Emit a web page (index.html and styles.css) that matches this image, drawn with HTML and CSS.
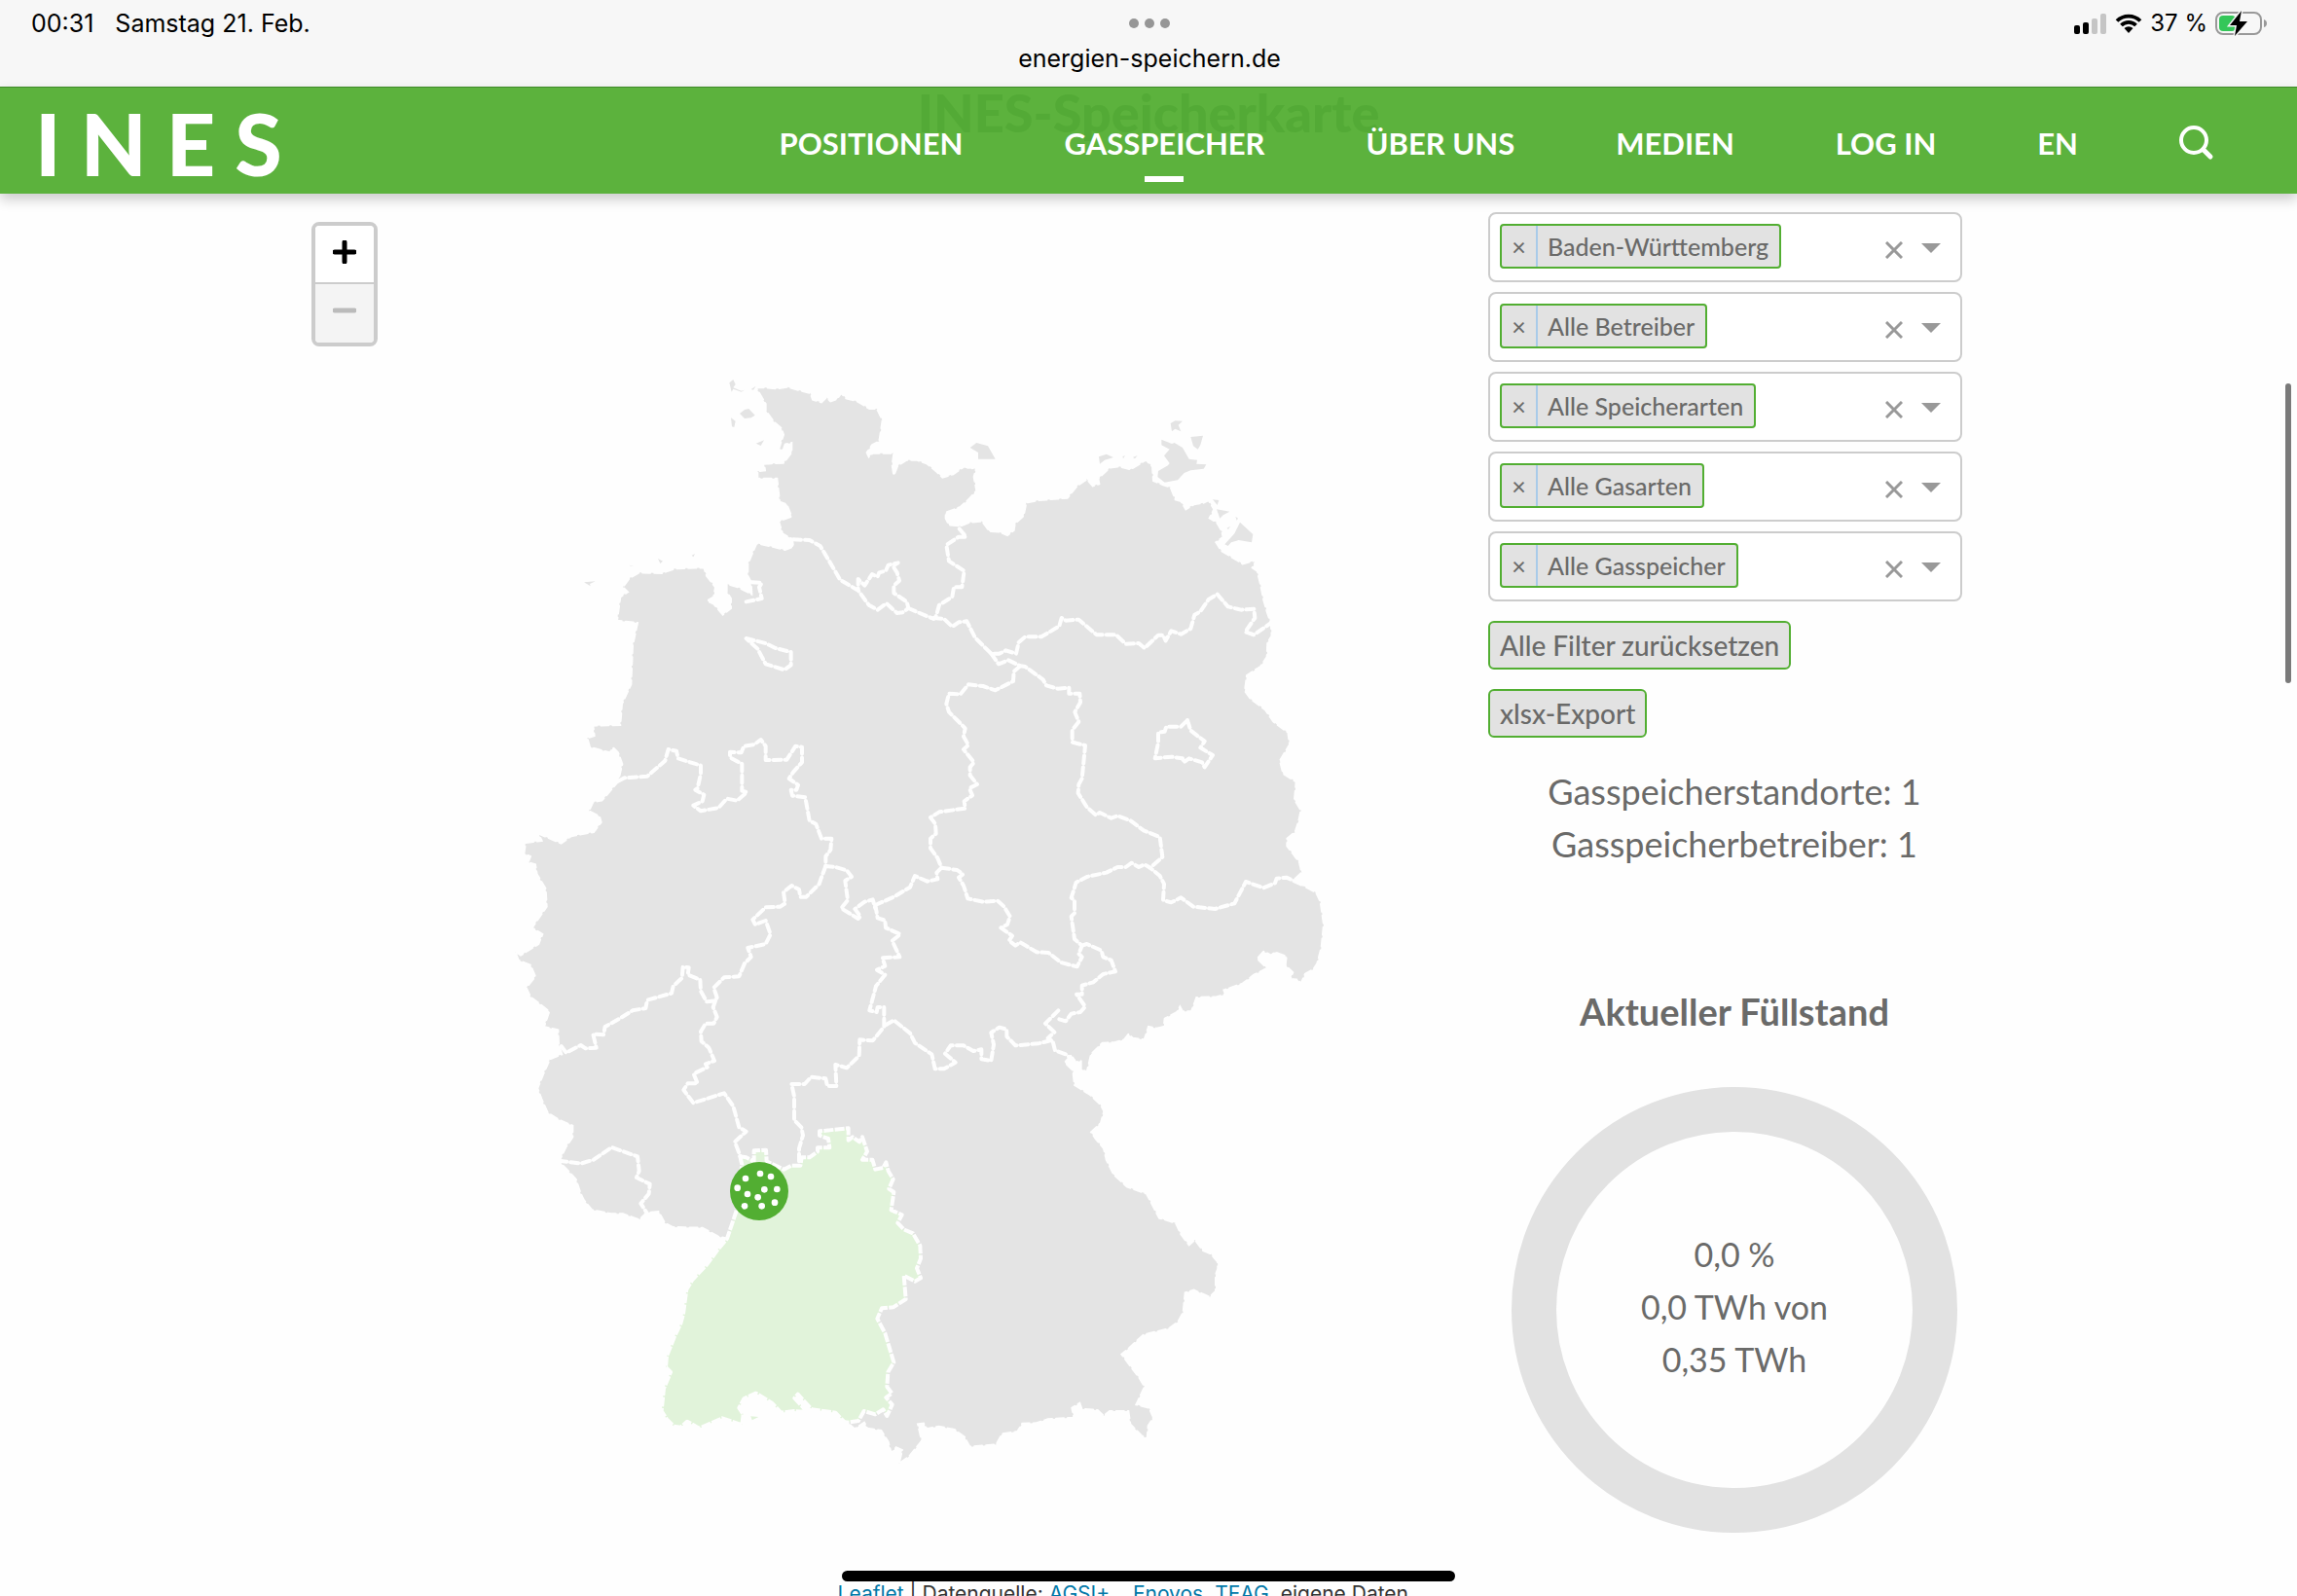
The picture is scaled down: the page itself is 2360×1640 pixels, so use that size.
FILE: index.html
```html
<!DOCTYPE html>
<html lang="de">
<head>
<meta charset="utf-8">
<meta name="viewport" content="width=device-width, initial-scale=1">
<title>INES-Speicherkarte</title>
<link rel="stylesheet" href="styles.css">
</head>
<body>
<div class="status">
  <div class="status-side status-left"><span>00:31</span><span>Samstag 21. Feb.</span></div>
  <div class="status-mid">
    <span class="dots"><i></i><i></i><i></i></span>
    <span class="url">energien-speichern.de</span>
  </div>
  <div class="status-side status-right">
    <svg width="34" height="21" viewBox="0 0 34 21" aria-hidden="true"><rect y="12" width="6" height="9" rx="2"/><rect x="9" y="9" width="6" height="12" rx="2"/><rect x="18" y="5" width="6" height="16" rx="2" fill="#c5c5c5"/><rect x="27" width="6" height="21" rx="2" fill="#c5c5c5"/></svg>
    <svg width="28" height="20" viewBox="0 0 28 20" aria-hidden="true"><path d="M2 7.500a17 17 0 0 1 24 0M6.500 12a10.600 10.600 0 0 1 15 0" fill="none" stroke="#000" stroke-width="3.800"/><path d="M14 20l-4.500-5a6.500 6.500 0 0 1 9 0z"/></svg>
    <span>37 %</span>
    <svg class="battery" width="54" height="26" viewBox="0 0 54 26" aria-hidden="true"><rect x="1" y="2" width="46" height="22" rx="7" fill="none" stroke="#999" stroke-width="2"/><path d="M50 9q3 1 3 4t-3 4z" fill="#999"/><rect x="4" y="5" width="17" height="16" rx="4" fill="#34c759"/><path d="M27 0L15 15h7l-2 11L33 11h-8z" stroke="#f7f7f7" stroke-width="3"/><path d="M27 0L15 15h7l-2 11L33 11h-8z"/></svg>
  </div>
</div>

<header class="header">
  <h1 class="under-title">INES-Speicherkarte</h1>
  <a class="logo" href="#" aria-label="INES"><span>I</span><span>N</span><span>E</span><span>S</span></a>
  <nav class="nav">
    <a href="#">POSITIONEN</a>
    <a href="#" class="active">GASSPEICHER</a>
    <a href="#">ÜBER UNS</a>
    <a href="#">MEDIEN</a>
    <a href="#">LOG IN</a>
    <a href="#">EN</a>
    <button class="search" type="button" aria-label="Suche"><svg width="36" height="36" viewBox="0 0 36 36"><circle cx="15" cy="15" r="13" fill="none" stroke="#fff" stroke-width="4"/><path d="M25 25l7 7" stroke="#fff" stroke-width="5" stroke-linecap="round"/></svg></button>
  </nav>
</header>

<main class="content">
  <section class="map">
    <div class="zoom">
      <button type="button" aria-label="Vergrößern"><svg width="24" height="24" viewBox="0 0 24 24"><path d="M2 12h20M12 2v20" stroke="#000" stroke-width="5" stroke-linecap="round"/></svg></button>
      <button type="button" aria-label="Verkleinern" disabled><svg width="24" height="24" viewBox="0 0 24 24"><path d="M2 12h20" stroke="#bbb" stroke-width="5" stroke-linecap="round"/></svg></button>
    </div>
    <svg class="germany" viewBox="0 0 2580 3480" role="img" aria-label="Karte der Gasspeicher in Deutschland">
      <path class="land coast" d="M770 85L800 85 835 88 868 83 900 92 938 102 945 122 972 130 987 115 1000 127 1020 120 1033 102 1048 118 1082 127 1120 150 1143 150 1160 185 1155 220 1150 250 1128 262 1112 285 1118 298 1130 287 1195 287 1190 325 1195 355 1207 325 1235 308 1265 308 1298 320 1328 345 1345 362 1378 352 1412 328 1430 335 1450 330 1442 360 1450 403 1425 430 1400 453 1355 470 1355 488 1365 508 1400 512 1430 500 1467 497 1490 528 1520 530 1545 540 1565 525 1568 505 1595 480 1603 440 1635 433 1730 425 1760 388 1790 367 1808 388 1828 382 1825 365 1860 332 1890 328 1925 337 1972 308 1992 328 1995 372 2025 385 2048 392 2063 430 2080 435 2095 460 2120 445 2150 440 2165 432 2182 460 2168 487 2190 500 2205 525 2210 545 2188 562 2205 588 2270 628 2313 617 2300 640 2315 650 2325 690 2335 740 2345 775 2357 810 2360 850 2347 870 2345 915 2325 945 2283 972 2277 1020 2295 1045 2340 1078 2365 1115 2410 1148 2415 1185 2385 1235 2395 1275 2435 1300 2430 1355 2450 1388 2443 1420 2432 1455 2407 1475 2407 1498 2445 1548 2452 1580 2430 1600 2460 1622 2497 1642 2510 1670 2520 1740 2513 1810 2500 1860 2488 1878 2463 1892 2450 1922 2440 1910 2417 1908 2425 1888 2402 1865 2405 1838 2370 1825 2358 1835 2335 1823 2315 1845 2345 1875 2305 1895 2270 1922 2212 1942 2217 1955 2190 1963 2128 1965 2112 2008 2085 2008 2077 1993 2068 2010 2030 2030 2027 2055 2005 2060 1980 2055 1967 2095 1932 2090 1918 2078 1905 2095 1877 2103 1838 2105 1803 2140 1790 2195 1772 2185 1772 2160 1755 2165 1742 2142 1722 2165 1747 2190 1752 2235 1800 2265 1832 2295 1843 2315 1833 2352 1803 2380 1818 2402 1842 2430 1850 2465 1872 2510 1913 2548 1974 2570 1995 2610 2013 2645 2064 2660 2080 2695 2105 2728 2123 2712 2148 2745 2172 2755 2193 2780 2194 2800 2187 2820 2187 2870 2169 2888 2120 2867 2093 2875 2087 2935 2071 2965 2044 2985 1964 3005 1921 3045 1897 3065 1927 3105 1952 3138 1968 3165 1942 3220 1982 3230 1995 3260 1979 3285 1976 3325 1958 3315 1924 3280 1918 3240 1860 3240 1842 3255 1823 3237 1774 3233 1768 3215 1744 3230 1750 3260 1670 3265 1633 3277 1591 3278 1576 3303 1529 3310 1511 3343 1429 3350 1413 3320 1382 3297 1333 3287 1297 3295 1287 3278 1269 3280 1281 3332 1242 3380 1211 3402 1221 3360 1202 3352 1187 3370 1178 3335 1156 3300 1113 3293 1104 3275 1074 3295 1052 3275 1000 3200 700 3150 681 2708 654 2702 605 2675 513 2673 489 2660 470 2625 433 2628 411 2650 360 2632 325 2632 265 2620 240 2590 230 2570 215 2525 190 2498 163 2470 185 2425 205 2395 205 2360 165 2343 128 2320 110 2280 97 2245 115 2200 135 2155 172 2140 162 2110 160 2065 117 2055 133 2008 75 1963 62 1935 90 1900 75 1865 38 1850 28 1823 45 1835 100 1800 112 1770 80 1750 125 1685 122 1630 95 1585 90 1555 68 1548 75 1530 55 1522 60 1488 110 1482 100 1460 170 1490 200 1468 270 1455 293 1425 288 1407 255 1390 268 1362 295 1358 345 1300 358 1245 345 1210 330 1195 320 1210 258 1193 250 1165 272 1158 268 1127 352 1125 357 1060 385 1000 390 880 405 810 342 803 352 730 375 715 360 700 380 672 410 655 480 657 520 643 610 640 618 665 645 700 640 730 620 742 640 752 668 785 693 765 693 735 680 715 680 690 715 700 757 722 755 685 745 665 745 630 757 600 772 565 820 575 860 585 885 575 882 552 852 535 840 497 880 482 865 445 843 437 835 365 775 365 775 343 798 340 795 320 855 317 880 285 880 255 860 260 855 275 840 275 855 230 848 210 825 190 800 155 800 135Z"/>
      <g class="land">
        <path d="M688 70L700 60 707 75 700 85 725 95 735 92 725 98 700 89 695 98zM720 165L735 153 748 150 767 170 755 178 735 180zM693 178L707 188 703 207 696 205zM770 257L795 247 785 264zM755 90L770 80 762 92z"/>
        <path d="M1430 270L1450 255 1485 265 1508 305 1455 305 1455 285zM1827 298L1850 290 1872 300 1845 308 1830 320zM1900 297l8-2-6 8zM1932 300l14-6-8 10z"/>
        <path d="M2020 245L2052 258 2060 255 2085 270 2105 305 2130 308 2128 320 2158 322 2150 335 2110 340 2090 348 2070 370 2030 377 2008 360 2010 342 2040 325 2045 318 2028 295 2045 275 2020 262zM2048 195L2062 187 2085 188 2072 200 2080 220 2062 212 2052 220zM2110 237L2148 233 2140 262 2132 275 2118 265z"/>
        <path d="M2178 430L2197 432 2192 447zM2190 460L2230 467 2210 478 2200 488zM2222 518l10-6-6 10zM2248 482l8 6-4 6zM2225 573L2215 568 2245 535 2262 500 2302 537 2298 562 2258 555 2235 562z"/>
        <path d="M240 685L275 682 258 690 260 697zM468 612L483 620 475 627zM572 602L582 597 577 607zM378 632L396 637 384 635z"/>
      </g>
      <path class="selected" d="M721 2455L740 2458 764 2470 764 2437 801 2435 803 2470 856 2495 880 2483 907 2483 911 2458 935 2458 960 2440 960 2428 997 2428 993 2400 966 2390 966 2377 1055 2368 1055 2405 1068 2395 1089 2410 1098 2395 1113 2440 1098 2465 1129 2465 1138 2495 1162 2490 1171 2473 1178 2500 1193 2525 1180 2555 1195 2565 1187 2620 1220 2635 1207 2660 1226 2680 1254 2692 1276 2730 1278 2770 1266 2800 1278 2830 1260 2840 1226 2822 1232 2895 1193 2920 1158 2923 1144 2955 1168 3000 1195 3090 1177 3120 1174 3165 1189 3185 1171 3198 1190 3220 1174 3255 1162 3235 1138 3250 1103 3240 1086 3270 1052 3275 1042 3273 1015 3245 942 3235 899 3188 889 3200 929 3243 887 3240 847 3245 819 3215 770 3185 733 3202 718 3230 731 3250 727 3283 666 3262 595 3293 558 3272 538 3290 517 3287 495 3265 479 3240 486 3170 507 3120 492 3105 495 3070 519 3010 538 2970 546 2940 556 2865 574 2835 617 2790 654 2740 681 2708 709 2625 727 2480z"/>
      <path fill="#e1f3da" d="M754 3256l24 2-20 10z"/>
      <g class="border">
        <path d="M885 553L935 555 968 573 1005 635 1030 678 1085 710 1118 755 1145 770 1172 750 1205 780 1222 778 1240 765 1235 745 1195 718 1195 695 1212 680 1205 655 1192 635 1208 625 1178 632 1170 650 1150 655 1145 668 1128 660 1105 695 1085 675 1085 710M1240 765L1270 778 1318 798 1325 790 1335 755 1375 730 1380 700 1405 700 1412 650 1365 620 1357 570 1395 545 1418 545 1395 518"/>
        <path d="M1318 795L1350 798 1375 822 1395 808 1420 805 1445 855 1475 885 1495 905 1520 905 1540 895 1572 905 1580 870 1600 853 1650 853 1705 820 1712 795 1725 803 1765 800 1820 847 1880 847 1910 875 1950 873 1968 888 2010 848 2025 848 2033 865 2050 835 2080 845 2110 828 2122 785 2140 775 2165 738 2192 722 2225 760 2265 770 2305 767 2308 795 2278 838 2305 847 2355 812"/>
        <path d="M1495 905L1518 937 1548 925 1585 943 1600 945 1655 985 1665 1003 1700 1013 1735 1010 1735 1028 1768 1028 1770 1055 1753 1085 1765 1115 1745 1140 1745 1178 1785 1188 1780 1240 1775 1290 1765 1308 1763 1335 1790 1378 1818 1403 1830 1395 1865 1412 1885 1405 1925 1420 1965 1450 2015 1470 2023 1532 1985 1565"/>
        <path d="M1585 943L1565 960 1563 990 1508 1018 1470 1005 1425 1000 1400 1030 1365 1028 1357 1060 1365 1085 1415 1135 1410 1160 1425 1187 1410 1200 1442 1240 1430 1255 1430 1280 1452 1308 1428 1320 1437 1342 1412 1360 1415 1382 1335 1393 1308 1410 1323 1430 1325 1460 1308 1475 1308 1505 1330 1535 1342 1565 1327 1580 1330 1600 1298 1607 1260 1590 1245 1625 1195 1655 1138 1680"/>
        <path d="M1342 1565L1390 1572 1408 1585 1395 1595 1410 1620 1423 1660 1470 1670 1515 1667 1535 1685 1553 1715 1545 1740 1525 1750 1560 1775 1550 1790 1570 1805 1585 1795 1635 1825 1672 1827 1710 1857 1760 1870 1775 1840 1765 1830 1775 1805 1752 1785 1742 1715 1752 1705 1752 1665 1742 1658 1757 1610 1790 1593 1850 1580 1885 1563 1910 1563 1928 1550 1950 1563 1968 1555 1985 1565 2015 1590 2028 1615 2025 1665 2050 1672 2080 1657 2118 1685 2185 1692 2245 1675 2280 1608 2335 1627 2370 1612 2375 1598 2405 1595 2450 1615"/>
        <path d="M1775 1805L1790 1800 1835 1820 1840 1840 1865 1850 1878 1885 1840 1893 1810 1918 1775 1928 1775 1955 1758 1955 1785 1993 1770 2010 1742 2015 1725 2038 1705 2032M1702 2005L1662 2045 1690 2072 1670 2090 1685 2100 1692 2128 1725 2140 1750 2160M1680 2097L1640 2107 1570 2113 1543 2085 1543 2063 1520 2057 1495 2073 1503 2110 1495 2160 1465 2155 1465 2125 1440 2130 1410 2113 1370 2113 1353 2138 1385 2165 1350 2185 1322 2185 1312 2140 1260 2105 1245 2075 1195 2035 1170 2050"/>
        <path d="M1138 1680L1145 1720 1168 1727 1170 1750 1215 1770 1190 1790 1213 1840 1160 1843 1168 1868 1143 1880 1168 1895 1140 1930 1120 2005 1142 2010 1145 1995 1165 1995 1165 2055 1130 2098 1090 2095 1088 2145 1050 2182 1015 2172 1018 2238 990 2238 985 2215 940 2210 920 2232 880 2232 888 2270 888 2343 910 2365 915 2390 903 2430 903 2470"/>
        <path d="M345 1298L365 1288 435 1283 490 1235 500 1200 525 1205 530 1228 600 1250 600 1275 590 1320 583 1325 610 1340 605 1360 577 1373 600 1390 655 1380 680 1352 712 1358 742 1332 727 1328 727 1245 690 1225 690 1208 725 1210 733 1190 765 1185 785 1170 800 1190 800 1233 865 1232 892 1190 912 1193 912 1240 885 1270 872 1290 900 1310 895 1325 878 1325 882 1343 922 1348 935 1420 955 1430 972 1475 1003 1475 1000 1510 985 1530 985 1560 1015 1563 1050 1573 1065 1593 1045 1605 1053 1665 1033 1690 1085 1722 1092 1715 1075 1692 1105 1670 1130 1663 1138 1690"/>
        <path d="M985 1560L970 1600 965 1615 925 1655 907 1655 903 1632 880 1620 855 1640 860 1675 845 1685 800 1687 760 1725 768 1740 800 1728 815 1770 800 1800 745 1812 755 1840 735 1860 718 1900 672 1903 640 1935 650 1965 645 1975 618 1978 600 1945 598 1910 560 1895 563 1873 545 1870 542 1905 515 1930 510 1952 435 1973 430 1998 390 2005 350 2030 305 2055 300 2080 268 2078 278 2120 245 2122 230 2112 185 2135 170 2115"/>
        <path d="M645 1975L638 1995 650 2025 640 2045 615 2045 600 2070 602 2100 625 2120 642 2160 615 2170 620 2180 578 2200 590 2230 560 2230 547 2250 577 2290 672 2260 700 2300 718 2365 740 2378 705 2410 722 2455M163 2468L230 2477 270 2465 325 2427 405 2455 410 2500 402 2520 443 2540 440 2570 415 2600 433 2628"/>
        <path d="M2100 1110L2110 1142 2153 1175 2140 1195 2178 1218 2153 1255 2145 1240 2105 1228 2088 1240 2085 1228 2050 1223 2000 1228 2010 1180 2010 1148 2030 1145 2035 1130 2080 1130zM740 858L800 873 830 888 878 900 878 940 858 955 800 937 775 890zM757 685L788 687 780 700 788 735 740 745"/>
      </g>
      <g class="marker">
        <circle cx="780" cy="2562" r="90" fill="#52ae32"/>
        <g fill="#fff"><circle cx="783" cy="2508" r="10"/><circle cx="816" cy="2517" r="10"/><circle cx="738" cy="2523" r="10"/><circle cx="713" cy="2552" r="10"/><circle cx="796" cy="2557" r="10"/><circle cx="835" cy="2556" r="10"/><circle cx="744" cy="2571" r="10"/><circle cx="776" cy="2581" r="10"/><circle cx="828" cy="2597" r="10"/><circle cx="735" cy="2608" r="10"/><circle cx="788" cy="2608" r="10"/></g>
      </g>
    </svg>
    <p class="credit"><a href="#">Leaflet</a> | Datenquelle: <a href="#">AGSI+</a>&nbsp; , <a href="#">Enovos</a>, <a href="#">TEAG</a>, eigene Daten</p>
  </section>

  <aside class="side">
    <form class="filters">
      <div class="filter"><span class="chip"><button type="button" aria-label="Entfernen">×</button><span>Baden-Württemberg</span></span><select aria-label="Bundesland"><option></option></select><button class="clear" type="button" aria-label="Leeren"><svg width="18" height="18" viewBox="0 0 18 18"><path d="M1 1l16 16M17 1L1 17"/></svg></button><span class="arrow"></span></div>
      <div class="filter"><span class="chip"><button type="button" aria-label="Entfernen">×</button><span>Alle Betreiber</span></span><select aria-label="Betreiber"><option></option></select><button class="clear" type="button" aria-label="Leeren"><svg width="18" height="18" viewBox="0 0 18 18"><path d="M1 1l16 16M17 1L1 17"/></svg></button><span class="arrow"></span></div>
      <div class="filter"><span class="chip"><button type="button" aria-label="Entfernen">×</button><span>Alle Speicherarten</span></span><select aria-label="Speicherart"><option></option></select><button class="clear" type="button" aria-label="Leeren"><svg width="18" height="18" viewBox="0 0 18 18"><path d="M1 1l16 16M17 1L1 17"/></svg></button><span class="arrow"></span></div>
      <div class="filter"><span class="chip"><button type="button" aria-label="Entfernen">×</button><span>Alle Gasarten</span></span><select aria-label="Gasart"><option></option></select><button class="clear" type="button" aria-label="Leeren"><svg width="18" height="18" viewBox="0 0 18 18"><path d="M1 1l16 16M17 1L1 17"/></svg></button><span class="arrow"></span></div>
      <div class="filter"><span class="chip"><button type="button" aria-label="Entfernen">×</button><span>Alle Gasspeicher</span></span><select aria-label="Gasspeicher"><option></option></select><button class="clear" type="button" aria-label="Leeren"><svg width="18" height="18" viewBox="0 0 18 18"><path d="M1 1l16 16M17 1L1 17"/></svg></button><span class="arrow"></span></div>
    </form>
    <div class="actions">
      <button type="button">Alle Filter zurücksetzen</button>
      <button type="button">xlsx-Export</button>
    </div>
    <div class="counts">
      <p>Gasspeicherstandorte: 1</p>
      <p>Gasspeicherbetreiber: 1</p>
    </div>
    <h2>Aktueller Füllstand</h2>
    <div class="ring">
      <p>0,0 %</p>
      <p>0,0 TWh von</p>
      <p>0,35 TWh</p>
    </div>
  </aside>
</main>
<div class="scrollbar"></div>
<div class="home-bar"></div>
</body>
</html>
```
FILE: styles.css
```css
* { box-sizing: border-box; }
body {
  margin: 0;
  height: 100vh;
  overflow: hidden;
  background: #fefefe;
  color: #6a6a69;
  font-family: Lato, "Open Sans", sans-serif;
}
p, h1, h2 { margin: 0; }
a { color: inherit; text-decoration: none; }
button, select { font: inherit; color: inherit; margin: 0; padding: 0; border: 0; background: none; }
svg { display: block; }

/* status bar */
.status {
  display: grid;
  grid-template-columns: 1fr auto 1fr;
  height: 89px;
  padding: 0 30px 0 32px;
  background: #f7f7f7;
  color: #000;
  font: 24px/28px Inter, sans-serif;
}
.status-side { display: flex; align-items: center; gap: 22px; height: 48px; }
.status-left { font-size: 25px; }
.status-right { justify-content: flex-end; gap: 8px; }
.status-mid { display: flex; flex-direction: column; align-items: center; gap: 15px; padding-top: 19px; }
.dots { display: flex; gap: 6px; }
.dots i { width: 10px; height: 10px; border-radius: 50%; background: #969696; }
.url { font-size: 25px; line-height: 32px; }

/* header */
.header {
  position: relative;
  z-index: 2;
  display: flex;
  align-items: center;
  justify-content: space-between;
  height: 110px;
  padding: 5px 85px 0 36px;
  border-top: 1px solid #3f8a28;
  background: #5cb23d;
  box-shadow: 0 6px 12px rgba(0, 0, 0, .2);
  color: #fff;
}
.under-title {
  position: absolute;
  top: 0;
  left: 0;
  right: 0;
  text-align: center;
  font-size: 54px;
  font-weight: 900;
  line-height: 52px;
  color: #53aa36;
}
.logo { position: relative; display: flex; gap: 20px; font-size: 88px; line-height: 88px; font-weight: 900; }
.nav { position: relative; display: flex; align-items: center; gap: 104px; font-size: 31px; line-height: 40px; font-weight: 700; }
.nav a { position: relative; }
.nav .active::after {
  content: "";
  position: absolute;
  left: 50%;
  bottom: -20px;
  width: 40px;
  height: 6px;
  margin-left: -20px;
  background: #fff;
}

/* content */
.content {
  display: grid;
  grid-template-columns: 1fr 511px;
  gap: 79px;
  max-width: 1720px;
  margin: 0 auto;
}
.map { position: relative; padding-top: 171px; }
.zoom {
  position: absolute;
  top: 29px;
  left: 0;
  border: 4px solid #ccc;
  border-radius: 8px;
  overflow: hidden;
}
.zoom button { display: grid; place-items: center; width: 60px; height: 60px; padding-bottom: 6px; background: #fff; }
.zoom button:first-child { border-bottom: 2px solid #ccc; padding-bottom: 4px; }
.zoom button:disabled { background: #f4f4f4; }
.germany { width: 100%; padding: 0 70px 0 200px; }
.land { fill: #e4e4e4; }
.coast { stroke: #fefefe; stroke-width: 6; stroke-linecap: round; stroke-dasharray: 24 12; }
.selected { fill: #e1f3da; stroke: #fefefe; stroke-width: 12; stroke-linejoin: round; stroke-dasharray: 30 4; }
.border { fill: none; stroke: #fefefe; stroke-width: 12; stroke-linejoin: round; stroke-linecap: round; stroke-dasharray: 24 12; }
.credit { margin-top: 92px; padding-right: 3px; text-align: right; font: 21px/32px Inter, sans-serif; color: #333; }
.credit a { color: #0078a8; }

/* filters */
.side { padding: 19px 5px 0 0; }
.filters { display: grid; gap: 10px; margin-right: 19px; }
.filter {
  display: flex;
  align-items: flex-start;
  height: 72px;
  padding: 10px 20px 0 10px;
  border: 2px solid #ccc;
  border-radius: 8px;
  background: #fff;
}
.chip {
  display: flex;
  height: 46px;
  border: 2px solid #52ae32;
  border-radius: 4px;
  background: #e2e2e2;
  font-size: 25px;
  line-height: 42px;
  font-weight: 500;
}
.chip button { width: 37px; border-right: 2px solid #a9cbe9; }
.chip > span { padding: 0 11px 0 10px; }
.filter select { flex: 1; min-width: 0; height: 46px; appearance: none; }
.clear { margin: 18px 19px 0 0; }
.clear path { stroke: #999; stroke-width: 3; }
.arrow { width: 20px; margin-top: 20px; border: 10px solid transparent; border-top-color: #999; border-bottom: 0; }
.actions { display: flex; flex-direction: column; align-items: flex-start; gap: 20px; margin-top: 20px; }
.actions button {
  height: 50px;
  padding: 0 10px;
  border: 2px solid #52ae32;
  border-radius: 6px;
  background: #e2e2e2;
  font-size: 28px;
  font-weight: 500;
}
.counts { margin-top: 28px; text-align: center; font-size: 36px; line-height: 54px; }
.side h2 { margin-top: 118px; text-align: center; font-size: 38px; line-height: 54px; }
.ring {
  display: flex;
  flex-direction: column;
  justify-content: center;
  width: 458px;
  height: 458px;
  margin: 51px auto 0;
  padding-bottom: 6px;
  border: 46px solid #e2e2e2;
  border-radius: 50%;
  text-align: center;
  font-size: 34px;
  line-height: 54px;
}

/* overlays */
.scrollbar { position: fixed; top: 394px; right: 6px; width: 6px; height: 308px; border-radius: 3px; background: #7a7a7a; }
.home-bar { position: fixed; left: 50%; bottom: 15px; width: 630px; height: 11px; margin-left: -315px; border-radius: 6px; background: #000; }
```
